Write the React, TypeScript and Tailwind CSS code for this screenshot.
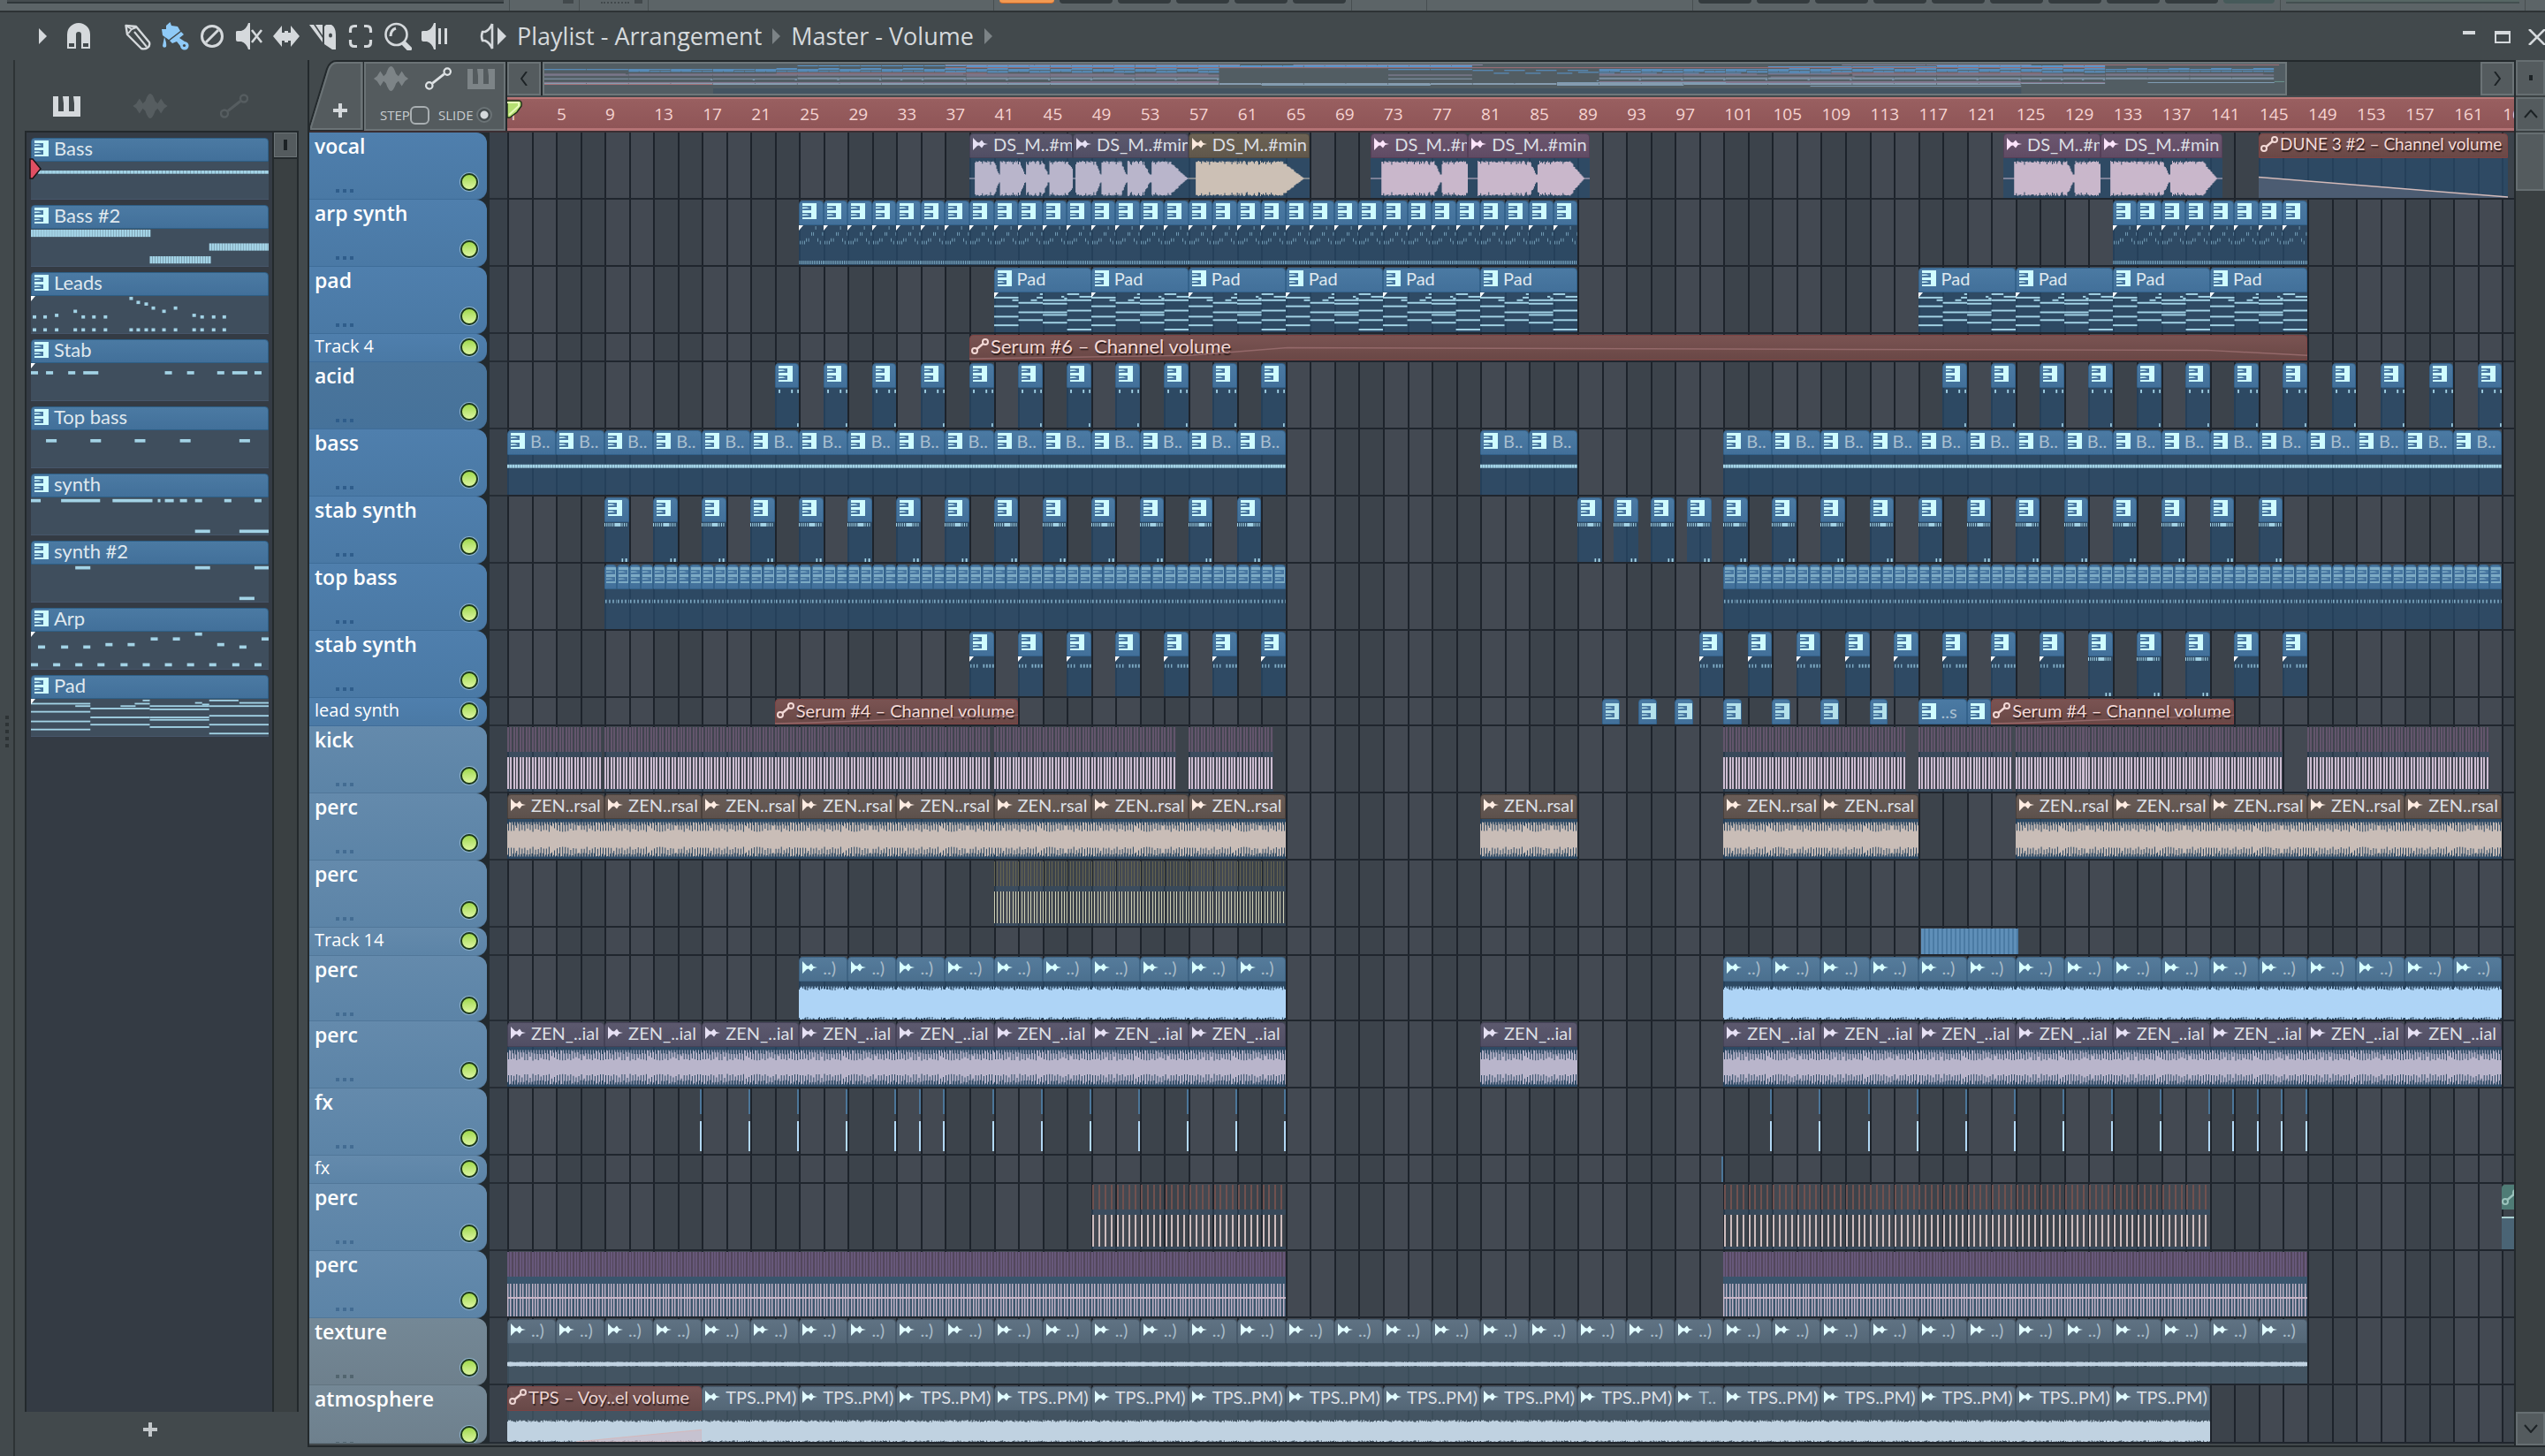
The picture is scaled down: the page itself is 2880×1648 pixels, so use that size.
import { memo, type CSSProperties, type ReactNode } from "react";
import { clsx } from "clsx";

/* ---------- data ---------- */

type Note = [x: number, y: number, w: number, h?: number];

const spread = (xs: number[], y: number, w: number): Note[] =>
  xs.map((x) => [x, y, w]);

const comb = (from: number, to: number, step: number, y: number, w: number, h = 4): Note[] => {
  const notes: Note[] = [];
  for (let x = from; x < to; x += step) notes.push([x, y, w, h]);
  return notes;
};

const LEAD_XS = [2, 14, 27, 48, 57, 69, 82, 111, 119, 128, 136, 148, 161, 182, 191, 204, 216];

const PAD_NOTES: Note[] = [
  [0, 5, 67, 2], [0, 15, 67, 2], [0, 27, 67, 2], [0, 37, 67, 2], [50, 8, 17, 2],
  [67, 11, 67, 2], [67, 22, 67, 2], [67, 31, 67, 2], [101, 8, 17, 2], [117, 5, 17, 2], [126, 1, 8, 2],
  [134, 8, 67, 2], [134, 12, 67, 2], [134, 22, 67, 2], [134, 25, 67, 2], [134, 34, 67, 2],
  [185, 4, 8, 2], [193, 6, 8, 2],
  [201, 1, 33, 2], [201, 8, 67, 2], [201, 20, 67, 2], [201, 31, 67, 2], [201, 42, 67, 2], [235, 4, 33, 2],
];

const PICKER: { name: string; notes: Note[]; mark?: boolean; selected?: boolean }[] = [
  { name: "Bass", selected: true, notes: comb(8, 268, 4, 11, 3.8) },
  {
    name: "Bass #2",
    notes: [
      ...comb(0, 134, 3, 1, 2.8, 9),
      ...comb(134, 201, 3, 34, 2.8, 9),
      ...comb(201, 268, 3, 18, 2.8, 9),
    ],
  },
  {
    name: "Leads",
    mark: true,
    notes: [
      ...spread([2, 14, 57, 69, 82, 191, 204, 216], 24, 4),
      ...spread([27, 182], 22, 4),
      ...spread([48, 148], 17, 4),
      ...spread([136, 161], 13, 4),
      [111, 1, 4], [119, 6, 4], [128, 8, 4],
      ...spread(LEAD_XS, 40, 4),
    ],
  },
  {
    name: "Stab",
    mark: true,
    notes: [
      ...spread([0, 17, 42, 151, 176, 210, 252], 10, 8),
      ...spread([59, 227], 10, 17),
    ],
  },
  { name: "Top bass", notes: spread([17, 67, 117, 168, 235], 11, 12) },
  {
    name: "synth",
    notes: [
      [0, 2, 11], [34, 2, 44], [92, 2, 45], [143, 2, 3], [151, 2, 10],
      ...spread([168, 185, 218, 252], 2, 8),
      [185, 40, 17], [235, 40, 33],
    ],
  },
  { name: "synth #2", notes: [...spread([50, 185, 252], 2, 17), [235, 40, 17]] },
  {
    name: "Arp",
    mark: true,
    notes: [
      [185, 1, 8],
      ...spread([135, 160, 260], 7, 8),
      ...spread([84, 109, 210], 14, 8),
      ...spread([8, 34, 59, 235], 17, 8),
      ...spread([0, 25, 50, 75, 101, 126, 151, 176, 201, 227, 252], 39, 8),
    ],
  },
  { name: "Pad", mark: true, notes: PAD_NOTES },
];

const NOTES: Record<string, Note[]> = {
  arp: [
    [182, 1, 8, 4], [137, 8, 8, 4], [158, 8, 8, 4], [258, 8, 8, 4],
    [80, 15, 8, 4], [104, 15, 8, 4], [206, 15, 8, 4],
    [10, 18, 8, 4], [35, 18, 8, 4], [60, 18, 8, 4], [232, 18, 8, 4],
    ...comb(4, 268, 20, 41, 10, 4),
  ],
  pad: PAD_NOTES,
  acid: [[40, 2, 18, 4], [178, 2, 18, 4], [246, 2, 16, 4], [244, 41, 16, 4]],
  bass: comb(0, 268, 14, 11, 13, 4),
  stab: [...comb(0, 110, 22, 1, 10), [110, 1, 70, 4], ...comb(190, 262, 24, 1, 10), [190, 42, 16, 4], [230, 42, 20, 4]],
  stab2: [...comb(10, 100, 34, 9, 14), ...comb(150, 260, 34, 9, 18)],
  top: comb(20, 268, 80, 12, 30, 4),
};

type Kind = "midi" | "audio" | "auto" | "stripes" | "ticks" | "green";

interface Clip {
  kind: Kind;
  start: number;
  end: number;
  label?: string;
  skin?: string;
  notes?: string;
  wave?: string;
  mark?: boolean;
  faint?: boolean;
}

const every = (from: number, to: number, step: number, rest: Omit<Clip, "start" | "end">, len = step): Clip[] => {
  const clips: Clip[] = [];
  for (let b = from; b < to; b += step) clips.push({ ...rest, start: b, end: b + len });
  return clips;
};

const one = (start: number, end: number, rest: Omit<Clip, "start" | "end">): Clip => ({ ...rest, start, end });

const arp = { kind: "midi", notes: "arp", mark: true, faint: true } as const;
const pad = { kind: "midi", notes: "pad", mark: true, label: "Pad" } as const;
const acid = { kind: "midi", notes: "acid" } as const;
const bass = { kind: "midi", notes: "bass", label: "B.." } as const;
const stab = { kind: "midi", notes: "stab" } as const;
const stab2 = { kind: "midi", notes: "stab2", mark: true, faint: true } as const;
const top = { kind: "midi", notes: "top", skin: "tiny", faint: true } as const;
const lead = { kind: "midi", skin: "lead" } as const;
const kick = { kind: "stripes", skin: "kick" } as const;
const rsal = { kind: "audio", skin: "brown", wave: "rsal", label: "ZEN..rsal" } as const;
const ial = { kind: "audio", skin: "violet", wave: "ial", label: "ZEN_..ial" } as const;
const hat = { kind: "audio", skin: "sky", wave: "hat", label: "..)" } as const;
const texture = { kind: "audio", skin: "slate", wave: "texture", label: "..)" } as const;
const tps = { kind: "audio", skin: "slate", wave: "atmo", label: "TPS..PM)" } as const;
const tick = { kind: "ticks" } as const;

interface Track {
  name: string;
  size: "lg" | "md" | "sm" | "cut";
  tone: "blue" | "dim" | "steel" | "grey";
  clips: Clip[];
}

const TRACKS: Track[] = [
  {
    name: "vocal", size: "lg", tone: "blue",
    clips: [
      one(39, 47.5, { kind: "audio", skin: "violet", wave: "vocA", label: "DS_M..#min" }),
      one(47.5, 57, { kind: "audio", skin: "violet", wave: "vocB", label: "DS_M..#min" }),
      one(57, 67, { kind: "audio", skin: "olive", wave: "vocC", label: "DS_M..#min" }),
      one(72, 80, { kind: "audio", skin: "pink", wave: "vocD", label: "DS_M..#min" }),
      one(80, 90, { kind: "audio", skin: "pink", wave: "vocE", label: "DS_M..#min" }),
      one(124, 132, { kind: "audio", skin: "pink", wave: "vocD", label: "DS_M..#min" }),
      one(132, 142, { kind: "audio", skin: "pink", wave: "vocE", label: "DS_M..#min" }),
      one(145, 165.5, { kind: "auto", skin: "fall", label: "DUNE 3 #2 – Channel volume" }),
    ],
  },
  { name: "arp synth", size: "lg", tone: "blue", clips: [...every(25, 89, 2, arp), ...every(133, 149, 2, arp)] },
  { name: "pad", size: "lg", tone: "blue", clips: [...every(41, 89, 8, pad), ...every(117, 149, 8, pad)] },
  {
    name: "Track 4", size: "sm", tone: "blue",
    clips: [one(39, 149, { kind: "auto", skin: "long", label: "Serum #6 – Channel volume" })],
  },
  { name: "acid", size: "lg", tone: "dim", clips: [...every(23, 65, 4, acid, 2), ...every(119, 165, 4, acid, 2)] },
  {
    name: "bass", size: "lg", tone: "blue",
    clips: [...every(1, 65, 4, bass), ...every(81, 89, 4, bass), ...every(101, 165, 4, bass)],
  },
  {
    name: "stab synth", size: "lg", tone: "blue",
    clips: [...every(9, 63, 4, stab, 2), ...every(89, 101, 3, stab, 2), ...every(101, 147, 4, stab, 2)],
  },
  { name: "top bass", size: "lg", tone: "blue", clips: [...every(9, 65, 1, top), ...every(101, 165, 1, top)] },
  {
    name: "stab synth", size: "lg", tone: "blue",
    clips: [
      ...every(39, 65, 4, stab2, 2),
      ...every(99, 131, 4, stab2, 2),
      ...every(131, 143, 4, stab, 2),
      ...every(143, 149, 4, stab2, 2),
    ],
  },
  {
    name: "lead synth", size: "sm", tone: "blue",
    clips: [
      one(23, 43, { kind: "auto", skin: "rise", label: "Serum #4 – Channel volume" }),
      ...every(91, 100, 3, lead, 1.5),
      ...every(101, 117, 4, lead, 1.5),
      one(117, 121, { kind: "midi", label: "..s" }),
      one(121, 123, { kind: "midi" }),
      one(123, 143, { kind: "auto", skin: "rise", label: "Serum #4 – Channel volume" }),
    ],
  },
  {
    name: "kick", size: "lg", tone: "steel",
    clips: [
      one(1, 8.75, kick), one(9, 40.75, kick), one(41, 56, kick), one(57, 64, kick),
      one(101, 116, kick), one(117, 124.75, kick), one(125, 147, kick), one(149, 164, kick),
    ],
  },
  {
    name: "perc", size: "lg", tone: "steel",
    clips: [...every(1, 65, 8, rsal), one(81, 89, rsal), ...every(101, 117, 8, rsal), ...every(125, 165, 8, rsal)],
  },
  { name: "perc", size: "lg", tone: "steel", clips: [one(41, 65, { kind: "stripes", skin: "olive" })] },
  { name: "Track 14", size: "sm", tone: "steel", clips: [one(117.25, 125.25, { kind: "stripes", skin: "solid" })] },
  { name: "perc", size: "md", tone: "steel", clips: [...every(25, 65, 4, hat), ...every(101, 165, 4, hat)] },
  { name: "perc", size: "lg", tone: "steel", clips: [...every(1, 65, 8, ial), one(81, 89, ial), ...every(101, 165, 8, ial)] },
  {
    name: "fx", size: "lg", tone: "steel",
    clips: [17, 21, 25, 29, 33, 35, 37, 41, 45, 49, 53, 57, 61, 65, 105, 109, 113, 117, 121, 125, 129, 133, 137, 141, 143, 145, 147, 149]
      .map((b) => one(b - 0.25, b, tick)),
  },
  { name: "fx", size: "sm", tone: "steel", clips: [one(100.75, 101, tick)] },
  {
    name: "perc", size: "lg", tone: "steel",
    clips: [
      one(49, 65, { kind: "stripes", skin: "red" }),
      one(101, 141, { kind: "stripes", skin: "red" }),
      one(165, 166, { kind: "green" }),
    ],
  },
  {
    name: "perc", size: "lg", tone: "steel",
    clips: [one(1, 65, { kind: "stripes", skin: "plum" }), one(101, 149, { kind: "stripes", skin: "plum" })],
  },
  { name: "texture", size: "lg", tone: "grey", clips: every(1, 149, 4, texture) },
  {
    name: "atmosphere", size: "cut", tone: "grey",
    clips: [
      ...every(1, 17, 8, { ...tps, label: undefined }),
      ...every(17, 97, 8, tps),
      one(97, 101, { ...tps, label: "T.." }),
      ...every(101, 141, 8, tps),
      one(1, 17, { kind: "auto", skin: "over", label: "TPS – Voy..el volume" }),
    ],
  },
];

/* ---------- waveforms ---------- */

const rnd = (n: number) => {
  const s = Math.sin(n * 127.1) * 43758.5453;
  return s - Math.floor(s);
};

const outline = (width: number, amp: (x: number) => number, mid = 23, size = 20) => {
  let upper = "";
  let lower = "";
  for (let x = 0; x < width; x++) {
    const a = amp(x) * size;
    upper += `H${x}V${(mid - a).toFixed(1)}`;
    lower = `V${(mid + a).toFixed(1)}H${x}` + lower;
  }
  return `M0 ${mid}${upper}H${width}${lower}Z`;
};

const bumps = (list: [number, number, number][]) => (x: number) => {
  for (const [from, hold, fall] of list) {
    if (x < from || x >= from + hold + fall) continue;
    const t = x - from;
    if (t < hold) return 0.9 + 0.1 * rnd(x + 3) - (rnd(x) > 0.8 ? 0.14 : 0);
    const floor = fall >= 12 ? 0.03 : 0.22;
    return Math.max(floor, (1 - (t - hold) / fall) * (0.75 + 0.2 * rnd(x)));
  }
  return 0.03;
};

// tight transient every third pixel over a denser core
const spikes = (core: number, period: number) => (x: number) => {
  if (x % 3 === 0) return 0.98;
  const swell = 0.35 * Math.max(0, 1 - (x % period) / period);
  return x % 3 === 1 ? Math.min(0.95, core + 0.35 + swell * rnd(x)) : core + swell * rnd(x + 7);
};

const WAVES: Record<string, { w: number; d: string }> = {
  vocA: { w: 117, d: outline(117, bumps([[7, 22, 6], [35, 22, 7], [64, 19, 7], [90, 21, 12]])) },
  vocB: { w: 131, d: outline(131, bumps([[4, 23, 6], [33, 22, 7], [62, 18, 9], [89, 22, 18]])) },
  vocC: { w: 138, d: outline(138, bumps([[9, 99, 22]])) },
  vocD: { w: 110, d: outline(110, bumps([[13, 59, 8], [80, 28, 8]])) },
  vocE: { w: 138, d: outline(138, bumps([[12, 59, 8], [79, 38, 14]])) },
  rsal: { w: 110, d: outline(110, spikes(0.42, 10)) },
  ial: { w: 110, d: outline(110, spikes(0.38, 12)) },
  hat: { w: 55, d: outline(55, (x) => (x % 3 === 0 ? 0.98 : 0.74 + 0.2 * rnd(x)), 25, 20) },
  texture: { w: 55, d: outline(55, (x) => 0.1 + 0.04 * rnd(x)) },
  atmo: { w: 110, d: outline(110, (x) => 0.78 + 0.22 * rnd(x), 23, 13) },
};

/* ---------- icons ---------- */

const PatternIcon = ({ className }: { className?: string }) => (
  <svg viewBox="0 0 16 18" className={clsx("h-[18px] w-4 shrink-0", className)}>
    <path
      fill="#cffcff"
      d="M0 0H16V18H0V16H10V11H0V8H10V3H0Z M0 4.6H5L8 5.4 0 6.2Z M0 12.6H5L8 13.4 0 14.2Z"
    />
  </svg>
);

const AudioIcon = ({ className }: { className?: string }) => (
  <svg viewBox="0 0 17 14" className={clsx("h-[14px] w-[17px] shrink-0", className)}>
    <path fill="currentColor" d="M0 0 5 5 7 5.5 10 2.5 12.5 6 17 7 12.5 8 10 11.5 7 8.5 5 9 0 14Z" />
  </svg>
);

const AutomationIcon = ({ className }: { className?: string }) => (
  <svg viewBox="0 0 32 28" fill="none" stroke="currentColor" strokeWidth="2.4" className={className}>
    <circle cx="5" cy="22.5" r="4" />
    <circle cx="27" cy="5.5" r="4" />
    <path d="M9 19.5 23 8.5" strokeWidth="3" />
  </svg>
);

const SmallAutomationIcon = () => (
  <svg viewBox="0 0 20 20" fill="none" stroke="currentColor" strokeWidth="2" className="size-5 shrink-0">
    <circle cx="4" cy="15" r="3" />
    <circle cx="16" cy="5" r="3" />
    <path d="M6.5 13 13.5 7" strokeWidth="2.4" />
  </svg>
);

const WaveIcon = ({ className }: { className?: string }) => (
  <svg viewBox="0 0 42 30" fill="currentColor" className={className}>
    <path d="M0 15 4 12 8 6 12 12 15 9C17 3 19 0 21 0S25 3 27 9L30 12 34 6 38 12 42 15 38 18 34 24 30 18 27 21C25 27 23 30 21 30S17 27 15 21L12 18 8 24 4 18Z" />
  </svg>
);

const PianoIcon = ({ className }: { className?: string }) => (
  <svg viewBox="0 0 31 23" fill="currentColor" className={className}>
    <path d="M0 0H6V17H12V8L11 0H18V17H24V8L23 0H31V23H0Z" />
  </svg>
);

const PlusIcon = () => (
  <svg viewBox="0 0 16 16" className="size-4">
    <path d="M6 0H10V6H16V10H10V16H6V10H0V6H6Z" fill="currentColor" />
  </svg>
);

const TOOLS: { label: string; icon: ReactNode }[] = [
  {
    label: "Draw",
    icon: (
      <g fill="none" stroke="currentColor" strokeWidth="2.4" strokeLinejoin="round">
        <path d="M2.5 4 14 5 29 23Q30 27 27 29T20 30L4 14Z" />
        <path d="M5 13 9 8 14 6M12 11 26 28M9 8 4 5" strokeWidth="2" />
      </g>
    ),
  },
  {
    label: "Paint",
    icon: (
      <g fill="#8fcaf7">
        <path d="M1 8 6 8 6 4 10.5 0 12 4 19 5 22 10 9 20 2 15Z" />
        <path d="M10 21 23 11 26 14 21 18 27 22A4.8 4.8 0 1 1 22 27L18 22 13 24Z" />
        <path d="M4 17Q7 24 6 28 3 30 2 27Z" />
        <circle cx="26.5" cy="26.5" r="1.6" fill="#41474a" />
      </g>
    ),
  },
  {
    label: "Delete",
    icon: (
      <g fill="none" stroke="currentColor" strokeWidth="3">
        <circle cx="16" cy="16" r="11.5" />
        <path d="M9 23 23 9" />
      </g>
    ),
  },
  {
    label: "Mute",
    icon: (
      <g fill="currentColor">
        <path d="M1 11Q1 10 3 10H7Q13 8 15 1H17V31H15Q13 24 7 22H3Q1 22 1 20Z" />
        <path d="M19 9 30 23M30 9 19 23" stroke="currentColor" strokeWidth="2.6" />
      </g>
    ),
  },
  { label: "Slip", icon: <path fill="currentColor" d="M1 16 11 4V12H14V10H18V12H21V4L31 16 21 28V21H18V23H14V21H11V28Z" /> },
  {
    label: "Slice",
    icon: (
      <path
        fill="currentColor"
        fillRule="evenodd"
        d="M0 3H5L15 18V23ZM7 3H15V15ZM17 5 19 3H25Q30 6 30 14V31H26L17 25ZM22 15A2 2.5 0 1 0 26 15 2 2.5 0 1 0 22 15Z"
      />
    ),
  },
  {
    label: "Select",
    icon: (
      <path
        fill="none"
        stroke="currentColor"
        strokeWidth="3.2"
        d="M12 4.5H9Q4.5 4.5 4.5 9V12M20 4.5H23Q27.5 4.5 27.5 9V12M12 27.5H9Q4.5 27.5 4.5 23V20M20 27.5H23Q27.5 27.5 27.5 23V20"
      />
    ),
  },
  {
    label: "Zoom",
    icon: (
      <g fill="none" stroke="currentColor">
        <circle cx="14.5" cy="14" r="12" strokeWidth="2.6" />
        <path d="M8 16Q8 9 14 7" strokeWidth="3" />
        <path d="M24 25 29 30" strokeWidth="6" strokeLinecap="round" />
      </g>
    ),
  },
  {
    label: "Playback",
    icon: (
      <g fill="currentColor">
        <path d="M1 11Q1 10 3 10H7Q13 8 15 1H17V31H15Q13 24 7 22H3Q1 22 1 20Z" />
        <path d="M20 7H23V25H20ZM27 7H30V25H27Z" />
      </g>
    ),
  },
];

const ToolButton = ({ label, className, children }: { label: string; className?: string; children: ReactNode }) => (
  <button type="button" aria-label={label} className={clsx("flex h-10 items-center justify-center", className)}>
    <svg viewBox="0 0 32 32" className="size-8">
      {children}
    </svg>
  </button>
);

const Crumb = ({ className }: { className?: string }) => (
  <svg viewBox="0 0 9 18" fill="currentColor" className={clsx("h-[18px] w-[9px]", className)}>
    <path d="M0 0 9 9 0 18Z" />
  </svg>
);

/* ---------- top of the window ---------- */

const Keys = ({ count }: { count: number }) => (
  <>
    {Array.from({ length: count }, (_, i) => (
      <span key={i} className="h-1 w-[60px] rounded-b-md bg-[#343b3e]" />
    ))}
  </>
);

const Rule = () => <span className="h-3 w-px bg-[#474e50]" />;

function ToolbarStrip() {
  return (
    <div className="flex h-[14px] items-start justify-between overflow-hidden border-b-2 border-[#2d3335] bg-[#5c6467]">
      <div className="flex items-start gap-[6px] pl-2">
        <span className="h-1 w-[562px] border-b-2 border-[#30373a] bg-[#454c4f]" />
        <Rule />
        <span className="ml-[54px] h-1 w-3 bg-[#42494c]" />
        <Rule />
        <span className="ml-[18px] h-1 w-8 border-b-2 border-dotted border-[#42494c]" />
        <span className="h-1 w-[9px] bg-[#42494c]" />
        <Rule />
        <span className="w-[378px]" />
        <Rule />
        <span className="h-1 w-[62px] rounded-b-md border-b border-[#c8672a] bg-[#f29a52]" />
        <Keys count={5} />
        <Rule />
        <span className="w-[72px]" />
        <Rule />
      </div>
      <div className="flex items-start gap-[6px] pr-[22px]">
        <Rule />
        <Keys count={9} />
        <span className="h-1 w-[58px] rounded-b-md bg-[#465a5a]" />
        <Rule />
        <span className="h-1 w-[264px] border-b-2 border-[#434f50] bg-[#566664]" />
        <Rule />
      </div>
    </div>
  );
}

function TitleBar() {
  return (
    <header className="flex h-[54px] items-center justify-between bg-[#42494c] pl-[34px] text-[#d5d9dc]">
      <div className="flex items-center">
        <button type="button" aria-label="Menu" className="flex w-7 justify-center">
          <Crumb />
        </button>
        <ToolButton label="Snap" className="w-[54px]">
          <path
            fill="currentColor"
            fillRule="evenodd"
            d="M3 30V14A13 13 0 0 1 29 14V30H19V14A3 3 0 0 0 13 14V30ZM5 24V28H11V24ZM21 24V28H27V24Z"
          />
        </ToolButton>
        <div className="ml-[19px] flex">
          {TOOLS.map(({ label, icon }) => (
            <ToolButton key={label} label={label} className="w-[42px]">
              {icon}
            </ToolButton>
          ))}
        </div>
        <ToolButton label="Preview" className="ml-6 w-[42px]">
          <path
            fill="none"
            stroke="currentColor"
            strokeWidth="2.6"
            d="M15 2V30Q12 23 7 21H4Q2 16 4 11H7Q12 9 15 2"
          />
          <path fill="currentColor" d="M21 6 31 16 21 26Z" />
        </ToolButton>
        <nav className="ml-[6px] flex items-center text-[27px] leading-8">
          <a href="#arrangement">Playlist - Arrangement</a>
          <Crumb className="mx-3 text-[#7c8386]" />
          <a href="#volume">Master - Volume</a>
          <Crumb className="mx-3 text-[#7c8386]" />
        </nav>
      </div>
      <div className="flex">
        <button type="button" aria-label="Minimize" className="flex h-6 w-[38px] justify-center pt-[6px]">
          <span className="h-1 w-[14px] bg-current" />
        </button>
        <button type="button" aria-label="Maximize" className="flex h-6 w-[38px] justify-center pt-[6px]">
          <span className="h-[14px] w-[18px] border-2 border-t-4 border-current" />
        </button>
        <button type="button" aria-label="Close" className="flex h-6 w-[29px] justify-end pt-1">
          <svg viewBox="0 0 19 18" fill="none" stroke="currentColor" strokeWidth="2.6" className="h-[18px] w-[19px]">
            <path d="M1 0 19 18M19 0 1 18" />
          </svg>
        </button>
      </div>
    </header>
  );
}

/* ---------- picker ---------- */

const NoteRoll = ({ notes, faint }: { notes: Note[]; faint?: boolean }) => (
  <svg
    viewBox="0 0 268 46"
    preserveAspectRatio="none"
    fill={faint ? "#7fabc4" : "#a3d3e6"}
    className="h-full w-full"
  >
    {notes.map(([x, y, w, h = 4], i) => (
      <rect key={i} x={x} y={y} width={w} height={h} />
    ))}
  </svg>
);

const Corner = () => (
  <svg viewBox="0 0 5 6" className="absolute top-0 left-0 h-[6px] w-[5px]">
    <path d="M0 0H5L0 6Z" fill="#fff" />
  </svg>
);

function Picker() {
  return (
    <aside className="flex w-[310px] shrink-0 flex-col">
      <div className="flex h-20 items-center gap-[58px] pt-6 pl-8">
        <button type="button" aria-label="Patterns" className="text-[#d5d9dc]">
          <PianoIcon className="h-[23px] w-[31px]" />
        </button>
        <button type="button" aria-label="Audio clips" className="text-[#565d60]">
          <WaveIcon className="h-7 w-[42px]" />
        </button>
        <button type="button" aria-label="Automation clips" className="text-[#565d60]">
          <AutomationIcon className="h-7 w-8" />
        </button>
      </div>
      <div className="flex flex-1 border-t-2 border-l-2 border-[#23292c]">
        <ul className="flex flex-1 flex-col gap-[6px] bg-[#343b44] pt-[6px] pr-[4px] pl-[5px]">
          {PICKER.map(({ name, notes, mark, selected }) => (
            <li key={name} className="h-[70px]">
              <div className="flex h-[27px] items-center gap-[6px] rounded-t-sm border border-[#2e5f86] bg-linear-to-b from-[#4b7aa3] to-[#42709a] pb-1 pl-[3px] font-['Lato',sans-serif] text-[22px] leading-6 text-[#dfe8ee]">
                <PatternIcon />
                {name}
              </div>
              <div className="relative h-[43px] border-b border-[#47566a] bg-[#3f4e5d]">
                <NoteRoll notes={notes} />
                {mark && <Corner />}
                {selected && (
                  <svg viewBox="0 0 14 24" className="absolute -top-1 -left-[2px] h-6 w-[14px]">
                    <path d="M1 1 4 1 13 12 4 23 1 23Z" fill="#e04f63" stroke="#1a1416" strokeWidth="1.5" />
                  </svg>
                )}
              </div>
            </li>
          ))}
        </ul>
        <div className="flex w-[30px] flex-col border-x-2 border-[#23292c] bg-[#3a4042]">
          <span className="flex h-[28px] items-center justify-center border border-[#6b7376] bg-[#545b5e]">
            <span className="h-3 w-1 bg-[#1c2225]" />
          </span>
          <span className="h-[2px] bg-[#23292c]" />
        </div>
      </div>
      <button type="button" aria-label="Add pattern" className="flex h-10 items-center justify-center pr-[26px] text-[#c3c8cb]">
        <PlusIcon />
      </button>
    </aside>
  );
}

/* ---------- clips ---------- */

const HEADS: Record<string, string> = {
  violet: "border-[#454257] bg-linear-to-b from-[#5c596e] to-[#514e64] text-[#e6e0f4]",
  olive: "border-[#514a3f] bg-linear-to-b from-[#6d6354] to-[#60574b] text-[#fbe9dc]",
  pink: "border-[#553f58] bg-linear-to-b from-[#6c566f] to-[#604b64] text-[#fbe3fa]",
  brown: "border-[#4a403b] bg-linear-to-b from-[#6a5d57] to-[#5d514c] text-[#fdebe1]",
  sky: "border-[#3d6282] bg-linear-to-b from-[#557b9b] to-[#4b708f] text-[#d8ffff]",
  slate: "border-[#465869] bg-linear-to-b from-[#5f7283] to-[#546777] text-[#e2fcff]",
};

const WAVE_FILL: Record<string, string> = {
  violet: "fill-[#b9b5cb]",
  olive: "fill-[#ccc0b5]",
  pink: "fill-[#c9b7cb]",
  brown: "fill-[#c9bdb7]",
  sky: "fill-[#aed4f6]",
  slate: "fill-[#c0d2e1]",
};

const STRIPES: Record<string, { perBar: number; head: string; body: string; line?: string }> = {
  kick: {
    perBar: 4,
    head: "bg-[repeating-linear-gradient(90deg,#63556c_0_2px,#40444e_2px_var(--step))]",
    body: "bg-[repeating-linear-gradient(90deg,#cdbdd2_0_2px,#3e424c_2px_var(--step))]",
  },
  olive: {
    perBar: 4,
    head: "bg-[repeating-linear-gradient(90deg,#65644f_0_1px,transparent_1px_var(--step))]",
    body: "bg-[repeating-linear-gradient(90deg,#cfd0b5_0_1px,transparent_1px_var(--step))]",
  },
  red: {
    perBar: 2,
    head: "bg-[repeating-linear-gradient(90deg,transparent_0_1px,#70514f_1px_3px,transparent_3px_var(--step))]",
    body: "bg-[repeating-linear-gradient(90deg,transparent_0_1px,#cdbcbd_1px_3px,transparent_3px_var(--step))]",
  },
  plum: {
    perBar: 4,
    head: "bg-[repeating-linear-gradient(90deg,#67587a_0_2px,#53475c_2px_var(--step))]",
    body: "bg-[repeating-linear-gradient(90deg,#c2b4c8_0_1px,#7c8299_1px_2px,#3c566c_2px_var(--step))]",
    line: "bg-[#c8b6c8]",
  },
};

const AUTO_LINES: Record<string, string> = {
  long: "M0 28 250 24 360 15 1000 17 1400 18 1514 24",
  rise: "M0 29 40 28 275 19",
};

const AutoHead = ({ label, skin, full }: { label?: string; skin?: string; full?: boolean }) => (
  <div
    className={clsx(
      "flex items-center gap-[2px] overflow-hidden rounded-t-sm border border-[#7e4343] bg-linear-to-b from-[#7a5352] to-[#6a4846] pb-1 pl-px text-[#f3d9d6] text-shadow-[1px_2px_1px_#2a1c1c]",
      full ? "h-full" : "h-7 shrink-0",
      skin === "over" && "opacity-95",
      skin === "long" && "text-[22px]",
      skin === "fall" && "text-[19px]",
    )}
  >
    <SmallAutomationIcon />
    <span className="whitespace-nowrap">{label}</span>
  </div>
);

function MidiClip({ clip, small }: { clip: Clip; small: boolean }) {
  const tiny = clip.skin === "tiny";
  return (
    <>
      <div
        className={clsx(
          "flex items-center gap-[6px] overflow-hidden rounded-t-sm border border-[#33628b] bg-linear-to-b from-[#4b7aa3] to-[#42709a] text-[#dfe8ee]",
          small ? "h-full pb-[2px]" : "h-7 shrink-0 pb-1",
          tiny ? "pl-[1px]" : "pl-[3px]",
        )}
      >
        <PatternIcon className={clsx(tiny && "opacity-40", clip.skin === "lead" && "opacity-80")} />
        {clip.label && (
          <span className={clsx("whitespace-nowrap", clip.label !== "Pad" && "text-[#a9bfd0]")}>{clip.label}</span>
        )}
      </div>
      {!small && (
        <div className="relative min-h-0 flex-1 bg-[#284b6b]/75">
          <NoteRoll notes={NOTES[clip.notes ?? "arp"]} faint={clip.faint} />
          {clip.mark && <Corner />}
        </div>
      )}
    </>
  );
}

function AudioClip({ clip }: { clip: Clip }) {
  const skin = clip.skin ?? "violet";
  const wave = WAVES[clip.wave ?? "ial"];
  const short = clip.end - clip.start <= 4;
  return (
    <>
      <div
        className={clsx(
          "flex h-7 shrink-0 items-center gap-[6px] overflow-hidden rounded-t-sm border pb-1 pl-[3px]",
          HEADS[skin],
        )}
      >
        <AudioIcon />
        <span className={clsx("whitespace-nowrap", short ? "text-[#a9bcc9]" : "text-[#dcdfe4]")}>{clip.label}</span>
      </div>
      <div className={clsx("min-h-0 flex-1", skin === "slate" ? "bg-[#445766]/80" : "bg-[#284b6b]/75")}>
        <svg
          viewBox={`0 0 ${wave.w} 46`}
          preserveAspectRatio="none"
          className={clsx("-ml-px h-[46px] w-[calc(100%+2px)]", WAVE_FILL[skin])}
        >
          <path d={wave.d} />
        </svg>
      </div>
    </>
  );
}

function StripesClip({ clip }: { clip: Clip }) {
  const skin = clip.skin ?? "kick";
  if (skin === "solid") {
    return <div className="h-full bg-[repeating-linear-gradient(90deg,#5f8fb8_0_3px,#4b7ba4_3px_5px)]" />;
  }
  const s = STRIPES[skin];
  const step = { "--step": `${100 / (clip.end - clip.start) / s.perBar}%` } as CSSProperties;
  return (
    <div className="flex h-full flex-col" style={step}>
      <div className={clsx("h-7 shrink-0", s.head)} />
      <div className={clsx("shrink-0", skin === "plum" ? "h-2 bg-[#3a556d]" : "h-[6px] bg-[#34506a]/50")} />
      <div className={clsx("flex min-h-0 flex-1 items-center", s.body)}>
        {s.line && <span className={clsx("mb-[6px] h-[2px] w-full", s.line)} />}
      </div>
      {skin !== "plum" && <div className="h-[3px] shrink-0 bg-[#34506a]/50" />}
    </div>
  );
}

function AutoClip({ clip }: { clip: Clip }) {
  const line = AUTO_LINES[clip.skin ?? ""];
  if (line) {
    return (
      <div className="grid h-full *:col-start-1 *:row-start-1">
        <AutoHead label={clip.label} skin={clip.skin} full />
        <svg
          viewBox={clip.skin === "long" ? "0 0 1514 30" : "0 0 275 30"}
          preserveAspectRatio="none"
          fill="none"
          stroke="#94696a"
          strokeWidth="1.5"
          className="h-[29px] w-full"
        >
          <path d={line} />
        </svg>
      </div>
    );
  }
  const over = clip.skin === "over";
  return (
    <>
      <AutoHead label={clip.label} skin={clip.skin} />
      <svg
        viewBox="0 0 282 46"
        preserveAspectRatio="none"
        className={clsx("min-h-0 w-full flex-1", !over && "bg-[#284b6b]/75")}
      >
        {over ? (
          <path d="M100 46 220 34 282 28V46Z" fill="#c9b7c4" fillOpacity="0.6" stroke="#d9b4b4" />
        ) : (
          <>
            <path d="M0 22 282 45V46H0Z" fill="#4c5c72" />
            <path d="M0 22 282 45" stroke="#d3bab9" strokeWidth="1.5" />
          </>
        )}
      </svg>
    </>
  );
}

function ClipView({ clip, small }: { clip: Clip; small: boolean }) {
  const from = Math.round((clip.start - 1) * 4) + 1;
  const to = Math.min(661, Math.round((clip.end - 1) * 4) + 1);
  return (
    <div className="row-start-1 flex min-h-0 min-w-0 flex-col overflow-hidden" style={{ gridColumn: `${from} / ${to}` }}>
      {clip.kind === "midi" && <MidiClip clip={clip} small={small} />}
      {clip.kind === "audio" && <AudioClip clip={clip} />}
      {clip.kind === "auto" && <AutoClip clip={clip} />}
      {clip.kind === "stripes" && <StripesClip clip={clip} />}
      {clip.kind === "ticks" && (
        <div className="flex h-full w-[2px] flex-col self-end">
          <span className={clsx("bg-[#4c7699]", small ? "h-full" : "h-7")} />
          {!small && <span className="mt-2 h-[34px] bg-[#b2d8f5]" />}
        </div>
      )}
    </div>
  );
}

/* ---------- playlist ---------- */

const ROW_HEIGHT = { lg: "h-[76px]", md: "h-[74px]", sm: "h-8", cut: "h-[66px]" };

const TONE = {
  blue: "from-[#4f7fad] to-[#4a79a5] border-[#3f6d99] [--dots:#2f5d8b]",
  dim: "from-[#4a759c] to-[#46729a] border-[#3f6d99] [--dots:#2f5d8b]",
  steel: "from-[#648aac] to-[#5c84a7] border-[#517799] [--dots:#436c92]",
  grey: "from-[#748896] to-[#6e808d] border-[#62747f] [--dots:#52656f]",
};

const LANES =
  "bg-[repeating-linear-gradient(90deg,#1d232b_0_2px,transparent_2px_1.21212%),repeating-linear-gradient(90deg,#434952_0_2.42424%,#3c434b_2.42424%_4.84848%)]";

function TrackRow({ track }: { track: Track }) {
  const small = track.size === "sm";
  const spill = track.clips.some((clip) => clip.kind === "green");
  return (
    <li className={clsx("flex overflow-hidden", ROW_HEIGHT[track.size])}>
      <div className="w-[204px] shrink-0 bg-[#222a2f] pr-[3px]">
        <div
          className={clsx(
            "flex h-full justify-between overflow-hidden rounded-r-xl border-b bg-linear-to-b pr-[10px] pl-[6px] text-white",
            TONE[track.tone],
          )}
        >
          <div className="flex flex-col">
            <span className={clsx(small ? "text-[20px] leading-7" : "text-[23px] leading-[30px] font-semibold")}>
              {track.name}
            </span>
            {!small && (
              <span className="mt-[34px] ml-6 flex gap-1">
                <i className="size-1 bg-[var(--dots)]" />
                <i className="size-1 bg-[var(--dots)]" />
                <i className="size-1 bg-[var(--dots)]" />
              </span>
            )}
          </div>
          <button
            type="button"
            aria-label={`Mute ${track.name}`}
            className={clsx(
              "h-5 w-5 rounded-full border-2 border-[#1d3a1c] bg-linear-to-b from-[#a0d84b] to-[#ddf6a0] ring-1 ring-[#8fb2cc]",
              small ? "mt-[5px]" : "mt-[46px]",
            )}
          />
        </div>
      </div>
      <div className="w-5 shrink-0 border-b-2 border-[#252c34] bg-[#39414a]" />
      <div className="grid min-w-0 flex-1 grid-cols-[repeat(660,minmax(0,1fr))] grid-rows-[minmax(0,1fr)] border-b-2 border-[#20262e] pt-px font-['Lato',sans-serif] text-[20px] leading-6">
        {track.clips
          .filter((clip) => clip.kind !== "green")
          .map((clip, i) => (
            <ClipView key={i} clip={clip} small={small} />
          ))}
        {spill && (
          <div className="row-start-1 flex flex-col overflow-hidden [grid-column:657/661]">
            <div className="flex h-7 shrink-0 items-end rounded-tl-sm bg-[#4f7c76] pb-1 text-[#9cc4bd]">
              <SmallAutomationIcon />
            </div>
            <div className="mt-2 flex-1 border-t-2 border-[#a9cfd0] bg-[#4a6475]" />
          </div>
        )}
      </div>
    </li>
  );
}

const MINI_TONE: Record<Kind, string> = {
  midi: "#5b9bd3",
  audio: "#8f87a3",
  auto: "#a57078",
  stripes: "#8a7c94",
  ticks: "#7fa3bf",
  green: "#6f9a94",
};

function MiniMap() {
  return (
    <div className="flex h-10 items-stretch border-t-2 border-[#23292c] bg-[#394043]">
      <button type="button" aria-label="Scroll left" className="flex w-[38px] items-center justify-center border-2 border-[#6b7376] bg-[#545b5e] text-[#1c2225]">
        <svg viewBox="0 0 8 16" className="h-4 w-2">
          <path d="M7 0 1 8 7 16" fill="none" stroke="currentColor" strokeWidth="2" />
        </svg>
      </button>
      <div className="flex flex-1 border-l-2 border-[#23292c]">
        <div className="w-[90%] border-2 border-[#6e777a] bg-[#525d63]">
          <svg viewBox="0 0 165 34" preserveAspectRatio="none" className="h-full w-full">
            {TRACKS.map((track, row) =>
              track.clips.map((clip, i) => (
                <rect
                  key={`${row}-${i}`}
                  x={clip.start - 1}
                  y={1 + row * 1.05}
                  width={clip.end - clip.start - 0.05}
                  height={0.95}
                  fill={row > 13 && clip.kind === "audio" ? "#8aa0b4" : MINI_TONE[clip.kind]}
                />
              )),
            )}
            <path d="M16 28H140V34H16Z" fill="#445461" />
            <path d="M68 24H84V25H68ZM96 21H112V22H96ZM96 24H108V25H96ZM108 22H120V23H108ZM120 25H140V26H120ZM44 22H60V23H44ZM152 21H164V22H152Z" fill="#7f9cb3" />
          </svg>
        </div>
      </div>
      <button type="button" aria-label="Scroll right" className="flex w-[38px] items-center justify-center border-2 border-[#6b7376] bg-[#545b5e] text-[#1c2225]">
        <svg viewBox="0 0 8 16" className="h-4 w-2">
          <path d="M1 0 7 8 1 16" fill="none" stroke="currentColor" strokeWidth="2" />
        </svg>
      </button>
    </div>
  );
}

function Ruler() {
  return (
    <div className="relative mt-[2px] h-[38px] border-t-2 border-b-[3px] border-t-[#ba7777] border-b-[#b47375] bg-linear-to-b from-[#995f60] to-[#8f5557]">
      <div className="grid h-full grid-cols-[repeat(165,minmax(0,1fr))] items-center overflow-hidden text-[19px] leading-8 text-[#f6d3d1]">
        {Array.from({ length: 42 }, (_, i) => (
          <span key={i} className="w-0 pl-px font-medium whitespace-nowrap" style={{ gridColumnStart: i * 4 + 1, gridRow: 1 }}>
            {i * 4 + 1}
          </span>
        ))}
      </div>
      <svg viewBox="0 0 18 22" className="absolute top-[1px] left-0 h-[22px] w-[18px]">
        <path d="M0 1H13Q17 1 16 7L11 14 3 20 0 20Z" fill="#b5df72" stroke="#20301a" strokeWidth="1.5" />
        <path d="M0 3H13V7L2 17" fill="none" stroke="#e6fab8" strokeWidth="2" />
      </svg>
    </div>
  );
}

function PlaylistHeader() {
  return (
    <div className="flex h-20">
      <div className="grid w-[62px] shrink-0 *:col-start-1 *:row-start-1">
        <svg viewBox="0 0 62 80" className="h-20 w-[62px]">
          <path d="M0 80V76L20 10Q23 1 31 1H62V80Z" fill="#545b5e" stroke="#23292c" strokeWidth="2" />
          <path d="M2 79V76L22 11Q25 3 31 3H59V78H2Z" fill="none" stroke="#6b7376" strokeWidth="2" />
        </svg>
        <button type="button" aria-label="Add track" className="flex items-end justify-end pr-[19px] pb-[15px] text-[#d5d9dc]">
          <PlusIcon />
        </button>
      </div>
      <div className="w-[162px] shrink-0 border-t-2 border-r-2 border-[#23292c]">
        <div className="flex h-full flex-col justify-between border-2 border-[#6b7376] bg-[#545b5e] pt-[3px] pb-1">
          <div className="flex h-7 items-center justify-between pr-[10px] pl-2 text-[#7d8487]">
            <WaveIcon className="h-7 w-[41px]" />
            <AutomationIcon className="h-[26px] w-8 text-[#dfe3e5]" />
            <PianoIcon className="h-[23px] w-[31px]" />
          </div>
          <div className="flex items-center pl-4 text-[15px] leading-6 font-medium text-[#c9ced1]">
            <label htmlFor="step" className="w-[34px]">STEP</label>
            <input id="step" type="checkbox" className="h-[21px] w-[22px] appearance-none rounded-md border-2 border-[#a9afb2]" />
            <label htmlFor="slide" className="ml-[10px] w-10">SLIDE</label>
            <input
              id="slide"
              type="radio"
              defaultChecked
              className="ml-[3px] size-[18px] appearance-none rounded-full border-2 border-[#6b7376] bg-[radial-gradient(circle,#d5d9dc_0_4px,#444b4e_5px)]"
            />
          </div>
        </div>
      </div>
      <div className="min-w-0 flex-1">
        <MiniMap />
        <Ruler />
      </div>
    </div>
  );
}

function VerticalScroll() {
  return (
    <div className="flex w-[35px] shrink-0 flex-col gap-[2px] border-l-2 border-[#23292c] bg-[#3a4042]">
      <button type="button" aria-label="Zoom" className="flex h-10 items-center justify-center border-2 border-[#666e71] bg-[#545b5e]">
        <span className="h-[6px] w-1 bg-[#1c2225]" />
      </button>
      <button type="button" aria-label="Scroll up" className="flex h-[38px] items-center justify-center border-2 border-[#666e71] bg-[#545b5e]">
        <svg viewBox="0 0 16 10" className="h-[10px] w-4">
          <path d="M1 9 8 1 15 9" fill="none" stroke="#1c2225" strokeWidth="2" />
        </svg>
      </button>
      <span className="h-[66px] border-2 border-[#666e71] bg-[#545b5e]" />
      <span className="flex-1" />
      <button type="button" aria-label="Scroll down" className="flex h-[38px] items-center justify-center border-2 border-[#666e71] bg-[#545b5e]">
        <svg viewBox="0 0 16 10" className="h-[10px] w-4">
          <path d="M1 1 8 9 15 1" fill="none" stroke="#1c2225" strokeWidth="2" />
        </svg>
      </button>
    </div>
  );
}

export default memo(function App() {
  return (
    <div className="flex min-h-screen flex-col overflow-hidden bg-[#42494c] font-['Open_Sans',sans-serif]">
      <ToolbarStrip />
      <div className="flex flex-1">
        <div className="flex w-[17px] shrink-0 flex-col items-center border-r-2 border-[#2d3335] pt-[796px]">
          <div className="flex flex-col gap-1">
            {[0, 1, 2, 3, 4].map((i) => (
              <i key={i} className="size-1 bg-[#2d3335]" />
            ))}
          </div>
        </div>
        <div className="-ml-[17px] flex min-w-0 flex-1 flex-col pl-[17px]">
          <div className="-ml-[17px]">
            <TitleBar />
          </div>
          <div className="flex flex-1">
            <div className="w-[11px] shrink-0" />
            <Picker />
            <div className="ml-[10px] flex min-w-0 flex-1 border-b-2 border-l-2 border-[#23292c]">
              <div className="min-w-0 flex-1">
                <PlaylistHeader />
                <div className="grid border-t-2 border-[#3b2e32] *:col-start-1 *:row-start-1">
                  <div className={clsx("ml-[224px]", LANES)} />
                  <ul className="relative min-w-0">
                    {TRACKS.map((track, i) => (
                      <TrackRow key={i} track={track} />
                    ))}
                  </ul>
                </div>
              </div>
              <VerticalScroll />
            </div>
          </div>
          <div className="h-[10px]" />
        </div>
      </div>
    </div>
  );
});
